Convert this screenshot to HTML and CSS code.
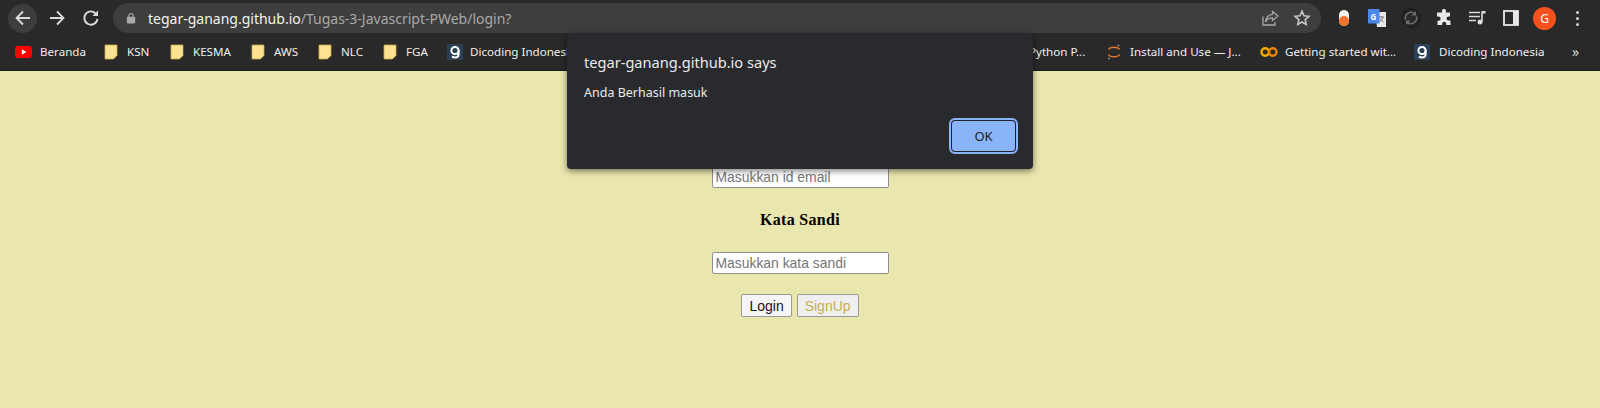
FILE: index.html
```html
<!DOCTYPE html>
<html lang="en">
<head>
  <meta charset="UTF-8">
  <meta name="viewport" content="width=device-width, initial-scale=1.0">
  <title>Login</title>
  <link rel="stylesheet" href="styles.css">
</head>
<body>
  <!-- Browser toolbar -->
  <header class="toolbar">
    <div class="nav-buttons">
      <span class="nav-btn back">
        <svg width="20" height="20" viewBox="0 0 20 20"><path d="M17 10H4M10 3.500 3.500 10l6.500 6.500" class="line"/></svg>
      </span>
      <span class="nav-btn">
        <svg width="20" height="20" viewBox="0 0 20 20"><path d="M3 10h13M10 3.500l6.500 6.500-6.500 6.500" class="line"/></svg>
      </span>
      <span class="nav-btn">
        <svg width="20" height="20" viewBox="0 0 20 20"><path d="M15.800 7A6.600 6.600 0 1 0 16.500 11" class="line"/><path d="M17 2.500V8h-5.500z" fill="#dcdcdc"/></svg>
      </span>
    </div>
    <div class="omnibox">
      <svg class="lock" width="10" height="12" viewBox="0 0 12 14"><path d="M3.500 6V4a2.500 2.500 0 0 1 5 0v2" fill="none" stroke="#a8a8a8" stroke-width="1.300"/><rect x="1" y="5.500" width="10" height="8" rx="1" fill="#a8a8a8"/></svg>
      <span class="url"><span class="host">tegar-ganang.github.io</span>/Tugas-3-Javascript-PWeb/login?</span>
      <svg class="omni-icon" width="20" height="20" viewBox="0 0 20 20"><path d="M3 8.500v8.500h12v-3" fill="none" stroke="#a8a8a8" stroke-width="1.300"/><path d="M12.500 3.500l5.500 4.500-5.500 4.500v-2.700C9 9.800 6.800 11.200 5.500 14c.4-4.200 3-7.200 7-7.700z" fill="none" stroke="#a8a8a8" stroke-width="1.300"/></svg>
      <svg class="omni-icon" width="18" height="18" viewBox="0 0 18 18"><path d="M9 2.300l2 4.500 4.900.5-3.700 3.300 1 4.800L9 13l-4.200 2.400 1-4.800-3.700-3.300 4.900-.5z" fill="none" stroke="#c8c8c8" stroke-width="1.600"/></svg>
    </div>
    <div class="extensions">
      <span class="ext ext-pill"><i></i></span>
      <svg class="ext" width="20" height="20" viewBox="0 0 20 20"><path d="M8 4h11v15H10z" fill="#e8e8e8"/><path d="M12 9h5M14.500 8v1.500M16 9.500c-.5 2-2 3.500-3.500 4.500M13 10.500c.6 1.500 2 3 3.500 3.500" fill="none" stroke="#777" stroke-width="1"/><path d="M1 1h11.500v14.500H1z" fill="#4a86e8"/><text x="3.500" y="11.500" class="ext-g">G</text></svg>
      <svg class="ext" width="20" height="20" viewBox="0 0 20 20"><circle cx="10" cy="10" r="9" fill="none" stroke="#1c1c1c" stroke-width="1.400"/><path d="M4.500 11.500a5.800 5.800 0 0 1 9.300-5.800M15.500 8.500a5.800 5.800 0 0 1-9.300 5.800" fill="none" stroke="#6e6e6e" stroke-width="1.500"/><path d="M15 3v4.500h-4.500zM5 17v-4.500h4.500z" fill="#6e6e6e"/></svg>
      <svg class="ext" width="18" height="18" viewBox="0 0 18 18"><path d="M7 1.500a2 2 0 0 1 3.900 0V3.500H15v4h-1.500a2 2 0 0 0 0 4H15.500V16h-4.300v-1.300a2 2 0 0 0-4 0V16H2.500v-4.200h1a2 2 0 0 0 0-4.300h-1.500V3.500H7z" fill="#e8e8e8"/></svg>
      <svg class="ext" width="20" height="20" viewBox="0 0 20 20"><path d="M2 4.500h11M2 8.500h11M2 12.500h7" stroke="#dcdcdc" stroke-width="1.600" fill="none"/><path d="M15 3.500v10" stroke="#dcdcdc" stroke-width="1.600"/><path d="M15 3h3.500v2.500H15z" fill="#dcdcdc"/><circle cx="13" cy="14" r="2.500" fill="#dcdcdc"/></svg>
      <svg class="ext" width="20" height="20" viewBox="0 0 20 20"><rect x="3" y="3" width="14" height="14" fill="none" stroke="#e8e8e8" stroke-width="1.800"/><rect x="12" y="3" width="5" height="14" fill="#e8e8e8"/></svg>
      <span class="avatar">G</span>
      <span class="menu-dots"><i></i><i></i><i></i></span>
    </div>
  </header>

  <!-- Bookmarks -->
  <nav class="bookmarks">
    <span class="bookmark bm-youtube">
      <svg width="17" height="12" viewBox="0 0 17 12"><rect width="17" height="12" rx="3" fill="#f00"/><path d="M6.800 3.300 11.500 6 6.800 8.700z" fill="#fff"/></svg>
      Beranda
    </span>
    <span class="bookmark bm-folder"><svg class="folder" width="14" height="16" viewBox="0 0 14 16"><path d="M1 1h12v10.500L9.500 15H1z" fill="#fde293" stroke="#c9a94f" stroke-width=".8"/></svg>KSN</span>
    <span class="bookmark bm-folder"><svg class="folder" width="14" height="16" viewBox="0 0 14 16"><path d="M1 1h12v10.500L9.500 15H1z" fill="#fde293" stroke="#c9a94f" stroke-width=".8"/></svg>KESMA</span>
    <span class="bookmark bm-folder"><svg class="folder" width="14" height="16" viewBox="0 0 14 16"><path d="M1 1h12v10.500L9.500 15H1z" fill="#fde293" stroke="#c9a94f" stroke-width=".8"/></svg>AWS</span>
    <span class="bookmark bm-folder"><svg class="folder" width="14" height="16" viewBox="0 0 14 16"><path d="M1 1h12v10.500L9.500 15H1z" fill="#fde293" stroke="#c9a94f" stroke-width=".8"/></svg>NLC</span>
    <span class="bookmark bm-folder"><svg class="folder" width="14" height="16" viewBox="0 0 14 16"><path d="M1 1h12v10.500L9.500 15H1z" fill="#fde293" stroke="#c9a94f" stroke-width=".8"/></svg>FGA</span>
    <span class="bookmark bm-dicoding">
      <svg width="16" height="16" viewBox="0 0 16 16"><rect width="16" height="16" fill="#2b3f55"/><circle cx="8" cy="6.500" r="3.600" fill="none" stroke="#fff" stroke-width="2"/><path d="M11.600 6.500V10c0 2.500-1.600 3.500-3.600 3.500-1.200 0-2.200-.3-3-1" fill="none" stroke="#fff" stroke-width="2"/></svg>
      Dicoding Indonesia
    </span>
    <span class="bookmark bm-python">Python P...</span>
    <span class="bookmark bm-jupyter">
      <svg width="16" height="18" viewBox="0 0 16 18"><path d="M2.500 6.500C4 3.500 12 3.500 13.500 6.500M2.500 11.500C4 14.500 12 14.500 13.500 11.500" fill="none" stroke="#e8762b" stroke-width="1.500"/><circle cx="12.500" cy="2.500" r="1" fill="#8a8a8a"/><circle cx="3" cy="15.500" r="1" fill="#8a8a8a"/></svg>
      Install and Use — J...
    </span>
    <span class="bookmark bm-colab">
      <svg width="18" height="12" viewBox="0 0 18 12"><circle cx="5.200" cy="6" r="3.700" fill="none" stroke="#f9ab00" stroke-width="2.400"/><circle cx="12.800" cy="6" r="3.700" fill="none" stroke="#e8820c" stroke-width="2.400"/></svg>
      Getting started wit...
    </span>
    <span class="bookmark bm-dicoding2">
      <svg width="16" height="16" viewBox="0 0 16 16"><rect width="16" height="16" fill="#2b3f55"/><circle cx="8" cy="6.500" r="3.600" fill="none" stroke="#fff" stroke-width="2"/><path d="M11.600 6.500V10c0 2.500-1.600 3.500-3.600 3.500-1.200 0-2.200-.3-3-1" fill="none" stroke="#fff" stroke-width="2"/></svg>
      Dicoding Indonesia
    </span>
    <span class="more">»</span>
  </nav>

  <!-- Login page -->
  <main class="page">
    <form class="login-form">
      <input class="field" type="text" placeholder="Masukkan id email">
      <label class="field-label">Kata Sandi</label>
      <input class="field" type="text" placeholder="Masukkan kata sandi">
      <div class="actions">
        <button class="btn login" type="button">Login</button>
        <button class="btn signup" type="button">SignUp</button>
      </div>
    </form>
  </main>

  <!-- Alert dialog -->
  <div class="dialog">
    <p class="dialog-title">tegar-ganang.github.io says</p>
    <p class="dialog-msg">Anda Berhasil masuk</p>
    <div class="dialog-actions">
      <button class="ok-btn" type="button">OK</button>
    </div>
  </div>
</body>
</html>
```

FILE: styles.css
```css
html, body {
  margin: 0;
  padding: 0;
  height: 408px;
  overflow: hidden;
}
body {
  display: flex;
  flex-direction: column;
  position: relative;
  background-color: #e9e6ae;
  font-family: "Noto Sans", sans-serif;
}

/* toolbar */
.toolbar {
  height: 36px;
  flex: none;
  display: flex;
  align-items: center;
  background-color: #292929;
}
.nav-buttons {
  display: flex;
  align-items: center;
  gap: 5px;
  padding-left: 8px;
  width: 105px;
  flex: none;
}
.nav-btn {
  width: 29px;
  height: 29px;
  border-radius: 50%;
  display: flex;
  align-items: center;
  justify-content: center;
}
.nav-btn.back {
  background-color: #3d3d3d;
}
.line {
  fill: none;
  stroke: #dcdcdc;
  stroke-width: 1.800;
}
.omnibox {
  width: 1208px;
  height: 30px;
  flex: none;
  box-sizing: border-box;
  padding: 0 10px 0 13px;
  display: flex;
  align-items: center;
  background-color: #3e3e3e;
  border-radius: 15px;
}
.url {
  margin-left: 12px;
  flex: 1;
  font-size: 14px;
  color: #a9a9a9;
  white-space: nowrap;
}
.host {
  color: #f2f2f2;
}
.omni-icon {
  margin-left: 13px;
}
.extensions {
  display: flex;
  align-items: center;
  flex: 1;
  padding-left: 18px;
}
.ext {
  flex: none;
  margin-right: 14px;
}
.ext-pill {
  width: 10px;
  height: 16px;
  border-radius: 5px;
  background-color: #f1efe9;
  display: flex;
  align-items: flex-end;
  margin-right: 18px;
}
.ext-pill i {
  width: 10px;
  height: 10px;
  border-radius: 50%;
  background-color: #f0742b;
}
.ext-g {
  font-size: 8px;
  font-weight: bold;
  fill: #fff;
}
.avatar {
  width: 23px;
  height: 23px;
  margin-left: -2px;
  border-radius: 50%;
  background-color: #f4511e;
  color: #fff;
  font-size: 12px;
  display: flex;
  align-items: center;
  justify-content: center;
  flex: none;
}
.menu-dots {
  margin-left: 20px;
  display: flex;
  flex-direction: column;
  gap: 3px;
}
.menu-dots i {
  width: 3px;
  height: 3px;
  border-radius: 50%;
  background-color: #d5d5d5;
}

/* bookmarks */
.bookmarks {
  height: 35px;
  flex: none;
  display: flex;
  align-items: center;
  background-color: #292929;
  border-bottom: 1px solid #1c1c1c;
  box-sizing: border-box;
  padding: 0 0 3px 15px;
  font-size: 11.600px;
  color: #f0f0f0;
  white-space: nowrap;
}
.bookmark {
  display: flex;
  align-items: center;
  gap: 8px;
  flex: none;
}
.bookmark svg {
  flex: none;
}
.bm-folder {
  gap: 9px;
}
.bm-youtube { width: 89px; }
.bm-folder:nth-child(2) { width: 66px; }
.bm-folder:nth-child(3) { width: 81px; }
.bm-folder:nth-child(4) { width: 67px; }
.bm-folder:nth-child(5) { width: 65px; }
.bm-folder:nth-child(6) { width: 64px; }
.bm-dicoding {
  width: 120px;
  gap: 7px;
}
.bm-python {
  margin-left: 462px;
  width: 77px;
}
.bm-jupyter {
  width: 154px;
  gap: 8px;
}
.bm-colab {
  width: 154px;
  gap: 7px;
}
.bm-dicoding2 {
  width: 158px;
  gap: 9px;
}
.more {
  font-size: 14px;
  color: #d5d5d5;
}

/* page */
.page {
  flex: 1;
  display: flex;
  justify-content: center;
}
.login-form {
  display: flex;
  flex-direction: column;
  align-items: center;
  padding-top: 95px;
}
.field {
  width: 177px;
  height: 22px;
  box-sizing: border-box;
  padding: 0 3px 1px;
  font-family: "Liberation Sans", Arial, sans-serif;
  font-size: 13.900px;
  background-color: #fff;
  border: 1px solid #8f8f8f;
  border-radius: 2px;
}
.field::placeholder {
  color: #757575;
}
.field-label {
  margin: 23px 0 24px;
  font-family: "Liberation Serif", "Times New Roman", serif;
  font-size: 16px;
  line-height: 17px;
  font-weight: bold;
  letter-spacing: .3px;
  color: #000;
}
.actions {
  display: flex;
  gap: 5px;
  margin-top: 20px;
}
.btn {
  height: 23px;
  padding: 0 7px;
  font-family: "Liberation Sans", Arial, sans-serif;
  font-size: 14px;
  border: 1px solid #9a9a9a;
  border-radius: 2px;
  background-color: #f5f5f5;
}
.login {
  color: #1c1020;
}
.signup {
  color: #c9ae4f;
  background-color: #efefef;
}

/* alert dialog */
.dialog {
  position: absolute;
  left: 567px;
  top: 33px;
  width: 466px;
  height: 136px;
  box-sizing: border-box;
  padding: 19px 17px 17px 17px;
  display: flex;
  flex-direction: column;
  background-color: #292a2d;
  border-radius: 4px;
  box-shadow: 0 2px 6px rgba(0, 0, 0, 0.5);
  color: #e8eaed;
}
.dialog-title {
  margin: 0;
  font-size: 14.600px;
  line-height: 20px;
}
.dialog-msg {
  margin: 12px 0 0;
  font-size: 12.500px;
  line-height: 18px;
}
.dialog-actions {
  margin-top: auto;
  display: flex;
  justify-content: flex-end;
}
.ok-btn {
  width: 65px;
  height: 32px;
  font-family: "Noto Sans", sans-serif;
  font-size: 13px;
  color: #202124;
  background-color: #8ab4f8;
  border: 1.500px solid #202124;
  border-radius: 4px;
  outline: 2px solid #8ab4f8;
}
```
